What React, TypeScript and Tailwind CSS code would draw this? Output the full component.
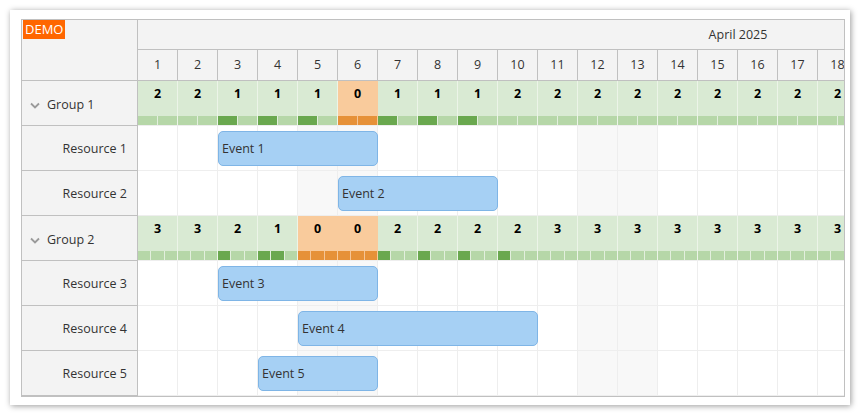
import React from 'react';

type SchedEvent = { text: string; start: number; end: number };
type Resource = { name: string; events: SchedEvent[] };
type Group = { name: string; resources: Resource[] };

const DAYS = Array.from({ length: 30 }, (_, i) => i + 1);
const WEEKEND = new Set([5, 6, 12, 13, 19, 20, 26, 27]);
const CELL = 40;

const groups: Group[] = [
  {
    name: 'Group 1',
    resources: [
      { name: 'Resource 1', events: [{ text: 'Event 1', start: 3, end: 6 }] },
      { name: 'Resource 2', events: [{ text: 'Event 2', start: 6, end: 9 }] },
    ],
  },
  {
    name: 'Group 2',
    resources: [
      { name: 'Resource 3', events: [{ text: 'Event 3', start: 3, end: 6 }] },
      { name: 'Resource 4', events: [{ text: 'Event 4', start: 5, end: 10 }] },
      { name: 'Resource 5', events: [{ text: 'Event 5', start: 4, end: 6 }] },
    ],
  },
];

function usedOn(group: Group, day: number) {
  return group.resources.filter((r) => r.events.some((e) => day >= e.start && day <= e.end)).length;
}

function Chevron() {
  return (
    <svg width="10" height="7" viewBox="0 0 10 7" className="shrink-0">
      <polyline points="1,1.5 5,5.5 9,1.5" fill="none" stroke="#9a9a9a" strokeWidth="1.8" />
    </svg>
  );
}

function GroupRow({ group }: { group: Group }) {
  const total = group.resources.length;
  return (
    <div className="flex h-[45px] border-b border-[#eeeeee]">
      {DAYS.map((d) => {
        const used = usedOn(group, d);
        const free = total - used;
        const full = free === 0;
        return (
          <div
            key={d}
            className={
              full
                ? 'w-[40px] shrink-0 flex flex-col border-r border-[#f9cb9c] bg-[#f9cb9c]'
                : 'w-[40px] shrink-0 flex flex-col border-r border-[#ecf4e8] bg-[#d9ead3]'
            }
          >
            <div className="flex-1 pt-[4px] text-center text-[12.5px] font-bold leading-[17px] text-black">
              {free}
            </div>
            <div className={full ? 'flex h-[9px] gap-px bg-[#f5c597]' : 'flex h-[9px] gap-px bg-[#e3efde]'}>
              {Array.from({ length: total }, (_, i) => (
                <div
                  key={i}
                  className={
                    full ? 'flex-1 bg-[#e69138]' : i < used ? 'flex-1 bg-[#6aa84f]' : 'flex-1 bg-[#b6d7a8]'
                  }
                />
              ))}
            </div>
          </div>
        );
      })}
    </div>
  );
}

function ResourceRow({ resource }: { resource: Resource }) {
  return (
    <div className="relative flex h-[45px] border-b border-[#eeeeee]">
      {DAYS.map((d) => (
        <div
          key={d}
          className={
            WEEKEND.has(d)
              ? 'w-[40px] shrink-0 border-r border-[#eeeeee] bg-[#f8f8f8]'
              : 'w-[40px] shrink-0 border-r border-[#eeeeee] bg-white'
          }
        />
      ))}
      {resource.events.map((e) => (
        <div
          key={e.text}
          className="absolute top-[5px] flex h-[35px] items-center rounded-[5px] border border-[#7fb5e6] bg-[#a6d0f4] pl-[3px] pt-[2px] text-[12.5px] text-[#333]"
          style={{ left: (e.start - 1) * CELL, width: (e.end - e.start + 1) * CELL }}
        >
          {e.text}
        </div>
      ))}
    </div>
  );
}

export default function App() {
  return (
    <div className="min-h-screen bg-white p-[10px] font-['Open_Sans',sans-serif] text-[12.5px] text-[#333]">
      <div className="h-[395px] w-[840px] bg-white pl-[11px] pt-[9px] shadow-[1px_1px_6px_rgba(0,0,0,0.4)]">
        <div className="flex w-[824px] overflow-hidden border border-[#c0c0c0]">
          <div className="w-[116px] shrink-0 border-r border-[#c0c0c0] bg-[#f3f3f3]">
            <div className="h-[61px] border-b border-[#c0c0c0] pl-px">
              <span className="inline-block bg-[#ff6600] px-[2px] text-[13px] leading-[19px] text-white">DEMO</span>
            </div>
            {groups.map((g) => (
              <React.Fragment key={g.name}>
                <div className="flex h-[45px] items-center gap-[7px] border-b border-[#c0c0c0] pl-[8px] pt-[4px]">
                  <Chevron />
                  <span>{g.name}</span>
                </div>
                {g.resources.map((r) => (
                  <div
                    key={r.name}
                    className="flex h-[45px] items-center justify-end border-b border-[#c0c0c0] pr-[10px] pt-[3px]"
                  >
                    {r.name}
                  </div>
                ))}
              </React.Fragment>
            ))}
          </div>
          <div className="min-w-0 flex-1 overflow-hidden">
            <div className="w-[1200px]">
              <div className="flex h-[30px] items-center justify-center border-b border-[#c0c0c0] bg-[#f3f3f3] pt-[1px]">
                April 2025
              </div>
              <div className="flex h-[31px] border-b border-[#c0c0c0] bg-[#f3f3f3]">
                {DAYS.map((d) => (
                  <div
                    key={d}
                    className="flex w-[40px] shrink-0 items-center justify-center border-r border-[#c0c0c0] pt-[1px]"
                  >
                    {d}
                  </div>
                ))}
              </div>
              {groups.map((g) => (
                <React.Fragment key={g.name}>
                  <GroupRow group={g} />
                  {g.resources.map((r) => (
                    <ResourceRow key={r.name} resource={r} />
                  ))}
                </React.Fragment>
              ))}
            </div>
          </div>
        </div>
      </div>
    </div>
  );
}
